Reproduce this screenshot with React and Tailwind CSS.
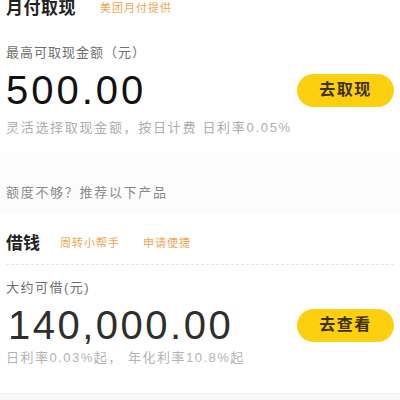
import React from 'react';

const font = { fontFamily: '"Liberation Sans", "Noto Sans CJK SC", sans-serif' };

const Section = ({ children, className = '' }) => (
  <div className={`bg-white px-[6px] ${className}`}>{children}</div>
);

const PillButton = ({ label }) => (
  <button className="h-[33px] w-[97px] rounded-full bg-[#fcd00f] text-[16px] font-bold tracking-[1.5px] text-[#3d3108] flex items-center justify-center">
    {label}
  </button>
);

const App = () => {
  return (
    <div className="w-[400px] h-[400px] overflow-hidden bg-[#f8f8f8]" style={font}>
      {/* 月付取现 */}
      <Section className="pt-[1px] pb-[15px]">
        <div className="h-[15px] flex items-center">
          <span className="text-[17px] font-bold leading-none text-[#222] tracking-[0.5px]">月付取现</span>
          <span className="ml-[24px] text-[11px] leading-none text-[#f2a552] tracking-[1px]">美团月付提供</span>
        </div>

        <div className="mt-[28px] h-[18px] flex items-center text-[13px] text-[#6f6f6f] tracking-[1px]">
          最高可取现金额（元）
        </div>

        <div className="mt-[8px] h-[40px] flex items-center justify-between">
          <span className="text-[40px] leading-none text-[#111] tracking-[3px]">500.00</span>
          <PillButton label="去取现" />
        </div>

        <div className="mt-[9px] h-[18px] flex items-center text-[13px] text-[#adadad] tracking-[1.7px] whitespace-nowrap">
          灵活选择取现金额，按日计费 日利率0.05%
        </div>
      </Section>

      {/* recommend */}
      <div className="bg-[#fcfcfc] px-[6px] pt-[32px] pb-[12px]">
        <div className="h-[18px] flex items-center text-[13px] text-[#8a8a8a] tracking-[1.7px]">
          额度不够？推荐以下产品
        </div>
      </div>

      {/* 借钱 */}
      <Section className="pt-[19px] pb-[26px] border-b border-[#f0f0f0]">
        <div className="h-[20px] flex items-center">
          <span className="text-[17px] font-bold leading-none text-[#222]">借钱</span>
          <span className="ml-[20px] text-[11px] leading-none text-[#f2a552] tracking-[1px]">周转小帮手</span>
          <span className="ml-[23px] text-[11px] leading-none text-[#f2a552] tracking-[1px]">申请便捷</span>
        </div>

        <div className="mt-[11px] border-t border-dashed border-[#e6e6e6]" />

        <div className="mt-[14px] h-[18px] flex items-center text-[13px] text-[#6f6f6f] tracking-[1.5px]">
          大约可借(元)
        </div>

        <div className="mt-[8px] h-[40px] flex items-center justify-between">
          <span className="ml-[2px] text-[40px] leading-none text-[#2e2e2e] tracking-[2.5px]">140,000.00</span>
          <PillButton label="去查看" />
        </div>

        <div className="mt-[4px] h-[18px] flex items-center text-[13px] text-[#b3b3b3] tracking-[1.5px] whitespace-nowrap">
          日利率0.03%起， 年化利率10.8%起
        </div>
      </Section>
    </div>
  );
};

export default App;
